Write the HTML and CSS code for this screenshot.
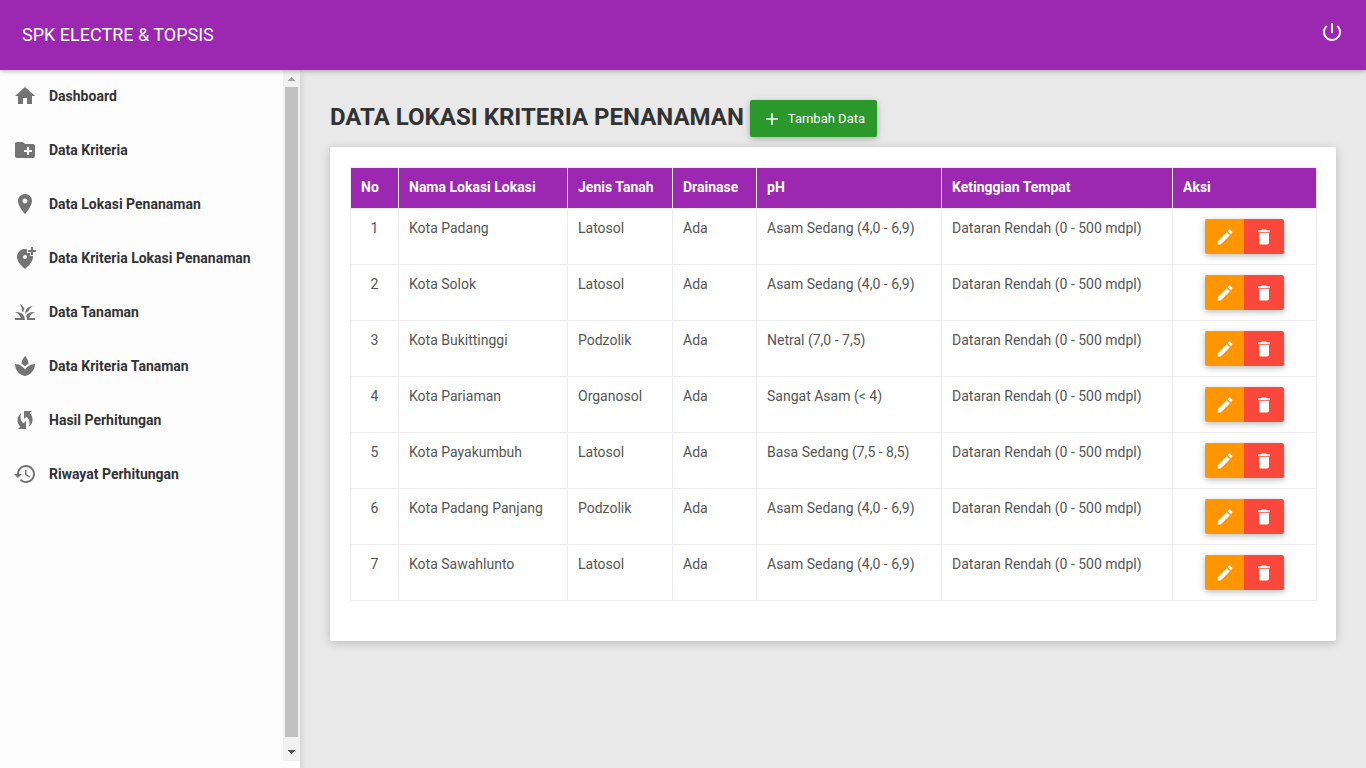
FILE: index.html
```
<!DOCTYPE html>
<html lang="id">
<head>
<meta charset="utf-8">
<meta name="viewport" content="width=device-width, initial-scale=1">
<title>SPK ELECTRE &amp; TOPSIS</title>
<link rel="stylesheet" href="styles.css">
</head>
<body>
<svg class="sprite" aria-hidden="true">
  <symbol id="edit" viewBox="0 0 24 24"><path d="M3 17.25V21h3.75L17.81 9.94l-3.75-3.75L3 17.25zM20.71 7.04c.39-.39.39-1.02 0-1.41l-2.34-2.34c-.39-.39-1.02-.39-1.41 0l-1.83 1.83 3.75 3.75 1.83-1.83z"/></symbol>
  <symbol id="delete" viewBox="0 0 24 24"><path d="M6 19c0 1.1.9 2 2 2h8c1.1 0 2-.9 2-2V7H6v12zM19 4h-3.5l-1-1h-5l-1 1H5v2h14V4z"/></symbol>
</svg>
<header class="navbar">
  <a class="brand" href="#">SPK ELECTRE &amp; TOPSIS</a>
  <a class="logout" href="#" aria-label="Keluar"><svg class="icon" viewBox="0 0 24 24"><path d="M13 3h-2v10h2V3zm4.83 2.17l-1.42 1.42C17.99 7.86 19 9.81 19 12c0 3.87-3.13 7-7 7s-7-3.13-7-7c0-2.19 1.01-4.14 2.58-5.42L6.17 5.17C4.23 6.82 3 9.26 3 12c0 4.97 4.03 9 9 9s9-4.03 9-9c0-2.74-1.23-5.18-3.17-6.83z"/></svg></a>
</header>
<div class="layout">
  <aside class="sidebar">
    <nav class="menu">
      <a href="#"><svg class="icon" viewBox="0 0 24 24"><path d="M10 20v-6h4v6h5v-8h3L12 3 2 12h3v8z"/></svg>Dashboard</a>
      <a href="#"><svg class="icon" viewBox="0 0 24 24"><path d="M20 6h-8l-2-2H4c-1.11 0-1.99.89-1.99 2L2 18c0 1.11.89 2 2 2h16c1.11 0 2-.89 2-2V8c0-1.11-.89-2-2-2zm-1 8h-3v3h-2v-3h-3v-2h3V9h2v3h3v2z"/></svg>Data Kriteria</a>
      <a href="#"><svg class="icon" viewBox="0 0 24 24"><path d="M12 2C8.13 2 5 5.13 5 9c0 5.25 7 13 7 13s7-7.75 7-13c0-3.87-3.13-7-7-7zm0 9.5c-1.38 0-2.5-1.12-2.5-2.5s1.12-2.5 2.5-2.5 2.5 1.12 2.5 2.5-1.12 2.5-2.5 2.5z"/></svg>Data Lokasi Penanaman</a>
      <a href="#"><svg class="icon" viewBox="0 0 24 24"><path fill-rule="evenodd" d="M20 1v3h3v2h-3v3h-2V6h-3V4h3V1zM12 13c1.1 0 2-.9 2-2s-.9-2-2-2-2 .9-2 2 .9 2 2 2zM14 3.25V7h3v3h2.92c.05.39.08.79.08 1.2 0 3.32-2.67 7.25-8 11.8-5.33-4.55-8-8.48-8-11.8C4 6.22 7.8 3 12 3c.68 0 1.35.08 2 .25z"/></svg>Data Kriteria Lokasi Penanaman</a>
      <a href="#"><svg class="icon" viewBox="0 0 24 24"><path d="M12 20H2v-2h5.75C7.02 15.19 4.81 12.99 2 12.26 2.64 12.1 3.31 12 4 12c4.42 0 8 3.58 8 8zM22 12.26C21.36 12.1 20.69 12 20 12c-2.93 0-5.48 1.58-6.88 3.93.29.66.53 1.35.67 2.07.13.65.2 1.32.2 2H22v-2h-5.75c.73-2.81 2.94-5.01 5.75-5.74zM15.64 11.02c.78-2.09 2.23-3.84 4.09-5C15.44 6.16 12 9.67 12 14v.02c.95-1.27 2.2-2.3 3.64-3zM11.42 8.85C10.58 6.66 8.88 4.89 6.7 4 8.14 5.86 9 8.18 9 10.71c0 .21-.03.41-.04.61.43.24.83.52 1.22.82.21-1.18.65-2.29 1.24-3.29z"/></svg>Data Tanaman</a>
      <a href="#"><svg class="icon" viewBox="0 0 24 24"><path d="M15.49 9.63c-.18-2.79-1.31-5.51-3.43-7.63-2.14 2.14-3.32 4.86-3.55 7.63 1.28.68 2.46 1.56 3.49 2.63 1.03-1.06 2.21-1.94 3.49-2.63zM12 15.45C9.85 12.17 6.18 10 2 10c0 5.32 3.36 9.82 8.03 11.49.63.23 1.29.4 1.97.51.68-.12 1.33-.29 1.97-.51C18.64 19.82 22 15.32 22 10c-4.18 0-7.85 2.17-10 5.45z"/></svg>Data Kriteria Tanaman</a>
      <a href="#"><svg class="icon" viewBox="0 0 24 24"><path d="M16.71 5.29L19 3h-8v8l2.3-2.3c1.97 1.46 3.25 3.78 3.25 6.42 0 1.31-.32 2.54-.88 3.63 2.33-1.52 3.87-4.14 3.87-7.12 0-2.51-1.08-4.75-2.83-6.34zM7.46 8.88c0-1.31.32-2.54.88-3.63C6 6.77 4.46 9.39 4.46 12.37c0 2.52 1.1 4.77 2.84 6.34L5 21h8v-8l-2.3 2.3c-1.96-1.46-3.24-3.78-3.24-6.42z"/></svg>Hasil Perhitungan</a>
      <a href="#"><svg class="icon" viewBox="0 0 24 24"><path d="M13 3c-4.97 0-9 4.03-9 9H1l3.89 3.89.07.14L9 12H6c0-3.87 3.13-7 7-7s7 3.13 7 7-3.13 7-7 7c-1.93 0-3.68-.79-4.94-2.06l-1.42 1.42C8.27 19.99 10.51 21 13 21c4.97 0 9-4.03 9-9s-4.03-9-9-9zm-1 5v5l4.28 2.54.72-1.21-3.5-2.08V8H12z"/></svg>Riwayat Perhitungan</a>
    </nav>
    <div class="scrollbar" aria-hidden="true">
      <svg class="arrow up" viewBox="0 0 7 4"><path d="M3 0h1v1h1v1h1v1h1v1H0V3h1V2h1V1h1z"/></svg>
      <div class="thumb"></div>
      <svg class="arrow" viewBox="0 0 7 4"><path d="M0 0h7v1H6v1H5v1H4v1H3V3H2V2H1V1H0z"/></svg>
    </div>
  </aside>
  <main class="content">
    <div class="heading">
      <h1>DATA LOKASI KRITERIA PENANAMAN</h1>
      <button class="add" type="button"><svg class="icon small" viewBox="0 0 24 24"><path d="M19 13h-6v6h-2v-6H5v-2h6V5h2v6h6v2z"/></svg>Tambah Data</button>
    </div>
    <section class="card">
      <table>
        <colgroup><col class="col-no"><col class="col-name"><col class="col-soil"><col class="col-drain"><col class="col-ph"><col class="col-height"><col class="col-action"></colgroup>
        <thead>
          <tr><th>No</th><th>Nama Lokasi Lokasi</th><th>Jenis Tanah</th><th>Drainase</th><th>pH</th><th>Ketinggian Tempat</th><th>Aksi</th></tr>
        </thead>
        <tbody>
          <tr><td>1</td><td>Kota Padang</td><td>Latosol</td><td>Ada</td><td>Asam Sedang (4,0 - 6,9)</td><td>Dataran Rendah (0 - 500 mdpl)</td><td><div class="actions"><button class="edit" type="button" aria-label="Ubah"><svg class="icon small"><use href="#edit"/></svg></button><button class="delete" type="button" aria-label="Hapus"><svg class="icon small"><use href="#delete"/></svg></button></div></td></tr>
          <tr><td>2</td><td>Kota Solok</td><td>Latosol</td><td>Ada</td><td>Asam Sedang (4,0 - 6,9)</td><td>Dataran Rendah (0 - 500 mdpl)</td><td><div class="actions"><button class="edit" type="button" aria-label="Ubah"><svg class="icon small"><use href="#edit"/></svg></button><button class="delete" type="button" aria-label="Hapus"><svg class="icon small"><use href="#delete"/></svg></button></div></td></tr>
          <tr><td>3</td><td>Kota Bukittinggi</td><td>Podzolik</td><td>Ada</td><td>Netral (7,0 - 7,5)</td><td>Dataran Rendah (0 - 500 mdpl)</td><td><div class="actions"><button class="edit" type="button" aria-label="Ubah"><svg class="icon small"><use href="#edit"/></svg></button><button class="delete" type="button" aria-label="Hapus"><svg class="icon small"><use href="#delete"/></svg></button></div></td></tr>
          <tr><td>4</td><td>Kota Pariaman</td><td>Organosol</td><td>Ada</td><td>Sangat Asam (&lt; 4)</td><td>Dataran Rendah (0 - 500 mdpl)</td><td><div class="actions"><button class="edit" type="button" aria-label="Ubah"><svg class="icon small"><use href="#edit"/></svg></button><button class="delete" type="button" aria-label="Hapus"><svg class="icon small"><use href="#delete"/></svg></button></div></td></tr>
          <tr><td>5</td><td>Kota Payakumbuh</td><td>Latosol</td><td>Ada</td><td>Basa Sedang (7,5 - 8,5)</td><td>Dataran Rendah (0 - 500 mdpl)</td><td><div class="actions"><button class="edit" type="button" aria-label="Ubah"><svg class="icon small"><use href="#edit"/></svg></button><button class="delete" type="button" aria-label="Hapus"><svg class="icon small"><use href="#delete"/></svg></button></div></td></tr>
          <tr><td>6</td><td>Kota Padang Panjang</td><td>Podzolik</td><td>Ada</td><td>Asam Sedang (4,0 - 6,9)</td><td>Dataran Rendah (0 - 500 mdpl)</td><td><div class="actions"><button class="edit" type="button" aria-label="Ubah"><svg class="icon small"><use href="#edit"/></svg></button><button class="delete" type="button" aria-label="Hapus"><svg class="icon small"><use href="#delete"/></svg></button></div></td></tr>
          <tr><td>7</td><td>Kota Sawahlunto</td><td>Latosol</td><td>Ada</td><td>Asam Sedang (4,0 - 6,9)</td><td>Dataran Rendah (0 - 500 mdpl)</td><td><div class="actions"><button class="edit" type="button" aria-label="Ubah"><svg class="icon small"><use href="#edit"/></svg></button><button class="delete" type="button" aria-label="Hapus"><svg class="icon small"><use href="#delete"/></svg></button></div></td></tr>
        </tbody>
      </table>
    </section>
  </main>
</div>
</body>
</html>
```
FILE: styles.css
```
* { box-sizing: border-box; }
body {
  margin: 0;
  min-height: 100vh;
  display: flex;
  flex-direction: column;
  background: #e9e9e9;
  color: #555;
  font: 14px/20px Roboto, Arial, sans-serif;
}
a { color: inherit; text-decoration: none; }
button { border: 0; margin: 0; color: #fff; font: inherit; cursor: pointer; }
.sprite { display: none; }
.icon { display: block; flex: none; width: 24px; height: 24px; fill: currentColor; }
.icon.small { width: 20px; height: 20px; }

.navbar {
  position: sticky;
  top: 0;
  z-index: 2;
  display: flex;
  justify-content: space-between;
  align-items: center;
  height: 70px;
  padding: 0 22px;
  background: #9c27b0;
  color: #fff;
  box-shadow: 0 1px 5px rgba(0, 0, 0, .3);
}
.brand { font-size: 18px; }
.logout { padding-bottom: 6px; }

.layout { flex: 1; display: flex; }
.sidebar {
  flex: none;
  display: flex;
  width: 300px;
  padding-bottom: 7px;
  background: #fdfdfd;
  box-shadow: 2px 2px 5px rgba(0, 0, 0, .1);
}
.menu { flex: 1; }
.menu a {
  display: flex;
  align-items: center;
  gap: 12px;
  padding: 14px 13px 16px;
  color: #333;
  font-weight: 700;
}
.menu .icon { color: #747474; }
.scrollbar {
  display: flex;
  flex-direction: column;
  align-items: center;
  gap: 6px;
  width: 17px;
  padding: 7px 0;
  background: #f1f1f1;
}
.arrow { flex: none; width: 7px; height: 4px; fill: #505050; margin: 7px 0 0; }
.arrow.up { fill: #a3a3a3; margin: 0; }
.thumb { flex: 1; width: 13px; background: #c1c1c1; }

.content { flex: 1; min-width: 0; padding: 30px; }
.heading { display: flex; align-items: flex-start; gap: 6px; margin-bottom: 10px; }
.heading h1 { margin: 0; color: #333; font-size: 24px; line-height: 34px; font-weight: 700; }
.add {
  display: flex;
  align-items: center;
  gap: 6px;
  padding: 9px 12px 8px;
  border-radius: 2px;
  background: #2b982b;
  font-size: 13px;
  box-shadow: 0 2px 5px rgba(0, 0, 0, .16), 0 2px 10px rgba(0, 0, 0, .12);
}
.card {
  padding: 20px 20px 40px;
  border-radius: 2px;
  background: #fff;
  box-shadow: 0 2px 10px rgba(0, 0, 0, .2);
}
table { width: 100%; table-layout: fixed; border-collapse: collapse; }
.col-no { width: 48px; }
.col-name { width: 169px; }
.col-soil { width: 105px; }
.col-drain { width: 84px; }
.col-ph { width: 185px; }
.col-height { width: 231px; }
.col-action { width: 144px; }
th, td { padding: 10px; border: 1px solid #eee; line-height: 18px; vertical-align: top; text-align: left; }
th { padding-bottom: 12px; background: #9c27b0; color: #fff; font-weight: 700; }
td:first-child { text-align: center; }
.actions {
  display: flex;
  width: max-content;
  margin: 0 auto;
  border-radius: 2px;
  box-shadow: 0 2px 5px rgba(0, 0, 0, .16), 0 2px 10px rgba(0, 0, 0, .12);
}
.actions button { padding: 8px 10px 7px; }
.edit { width: 39px; border-radius: 2px 0 0 2px; background: #ff9600; }
.delete { width: 40px; border-radius: 0 2px 2px 0; background: #fb483a; }
```
